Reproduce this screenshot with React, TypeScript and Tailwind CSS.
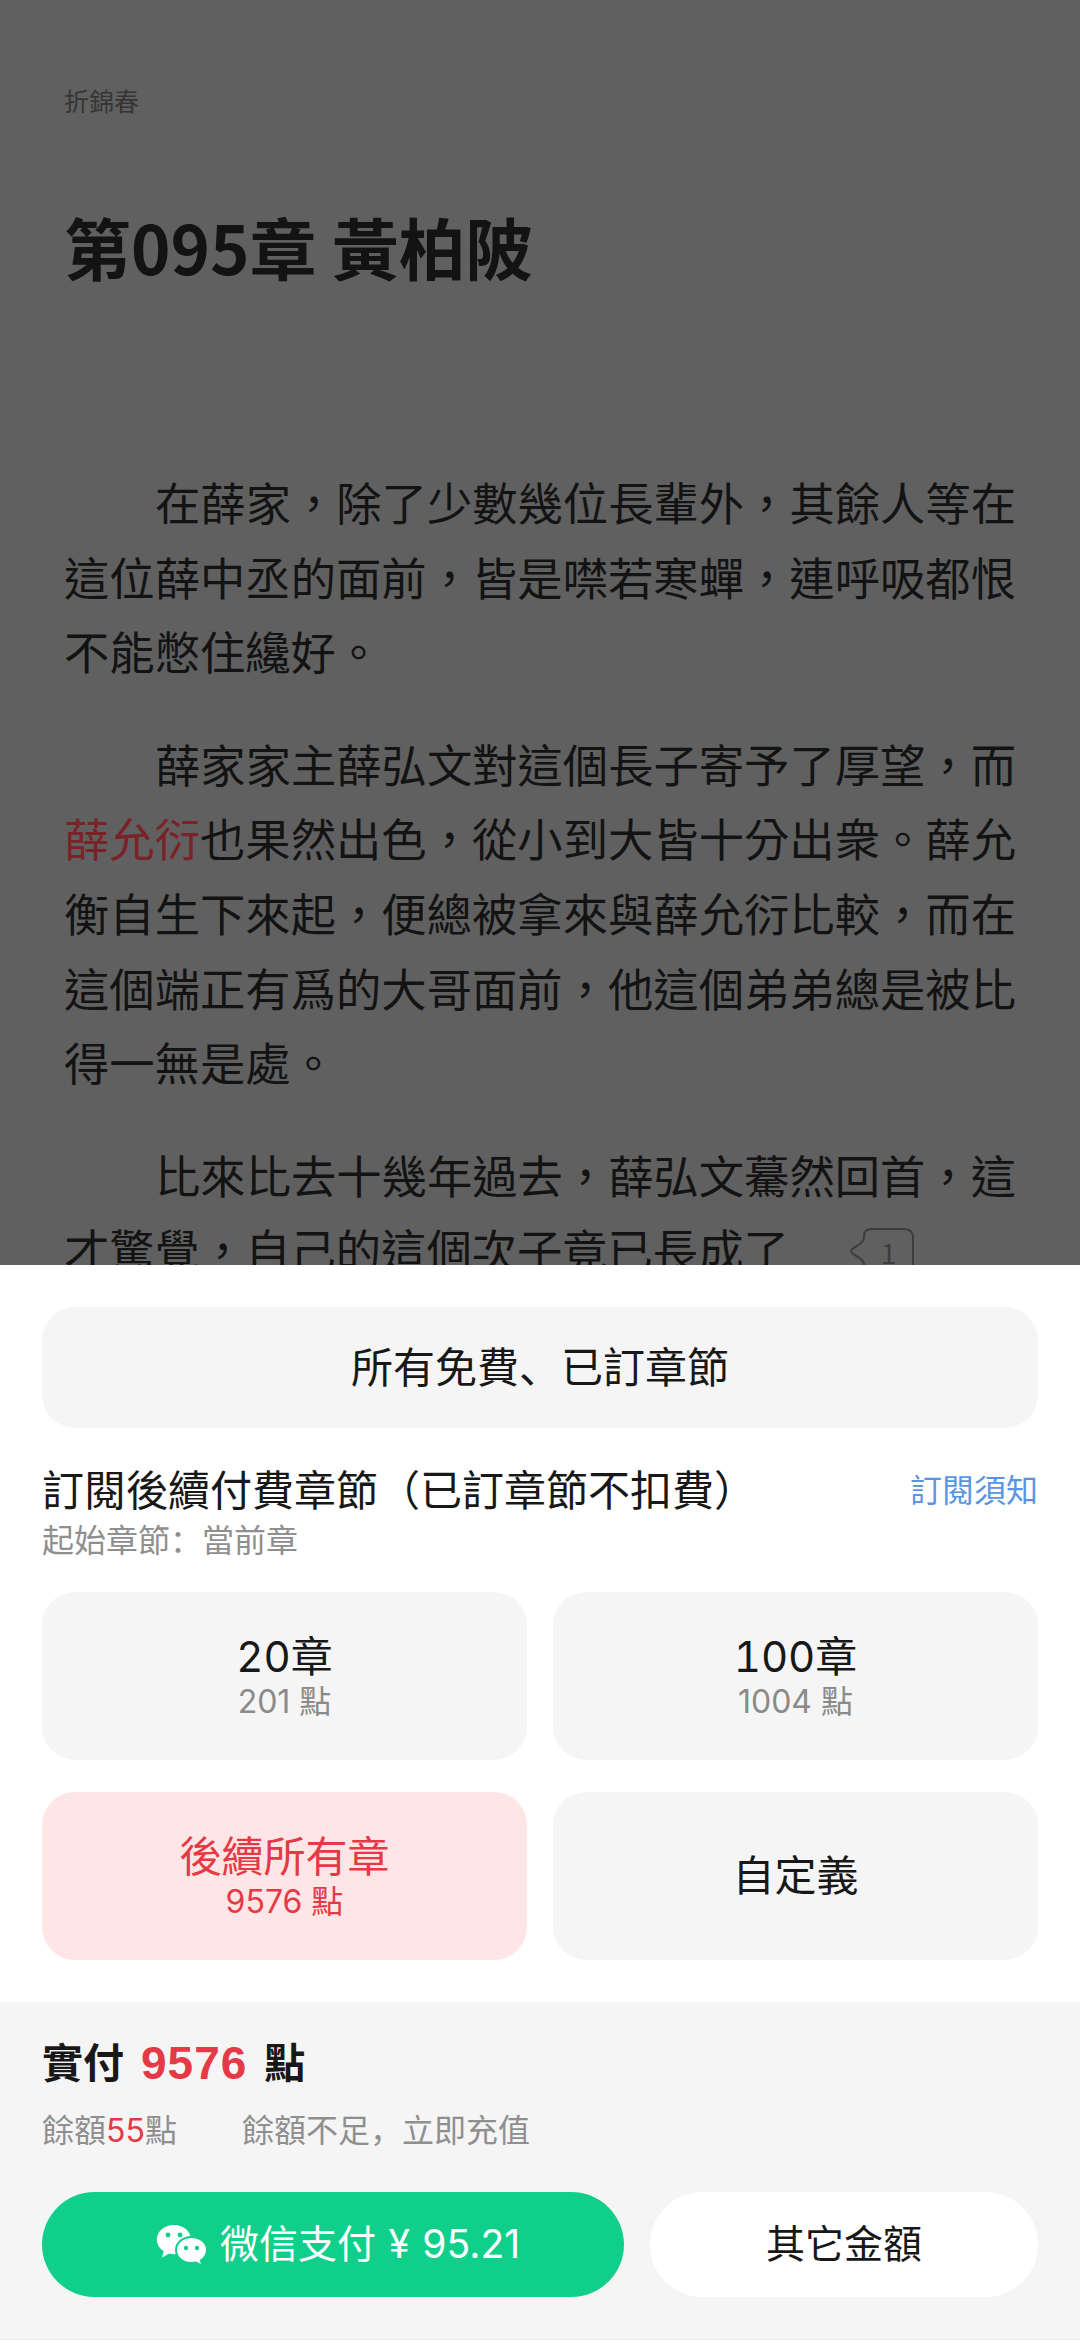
const bodyFont = "font-['Noto_Sans_CJK_TC',sans-serif]"

// comment count bubble at the end of a paragraph line
function CommentMark() {
  return (
    <span className="relative ml-[61px] inline-block h-[40px] w-[64px] indent-0">
      <svg viewBox="0 0 64 40" className="absolute left-0 top-0 h-[40px] w-[64px]" fill="none" stroke="#3c3c3c" strokeWidth="2">
        <path d="M14 40 V36 C14 30 1 27 1 23 C1 20 14 16 14 10 V8 C14 3 17 1 22 1 H54 C60 1 63 4 63 10 V40" />
      </svg>
      <span className="absolute left-[31px] top-[4px] text-[28px] leading-[40px] text-[#3c3c3c]">1</span>
    </span>
  )
}

function WeChatIcon() {
  return (
    <svg viewBox="0 0 52 42" className="h-[42px] w-[52px] shrink-0">
      <path fill="#fff" d="M18 1C8.300 1 .8 7.600.8 15.600c0 4.900 2.800 9 7 11.700l-1.900 6.400 7.100-4.100c1.600.4 3.200.6 5 .6 9.700 0 17-6.600 17-14.600S27.700 1 18 1z" />
      <path fill="#fff" stroke="#10cf8a" strokeWidth="2" d="M35.500 13C26.900 13 20 18.800 20 26c0 7.200 6.900 13 15.500 13 1.600 0 3-.2 4.400-.5l6.600 3.500-1.600-5.700C48.800 33.900 51 30.200 51 26c0-7.200-6.900-13-15.500-13z" />
      <circle cx="12" cy="11" r="2.400" fill="#10cf8a" />
      <circle cx="24" cy="11" r="2.400" fill="#10cf8a" />
      <circle cx="30" cy="24" r="2.200" fill="#10cf8a" />
      <circle cx="41" cy="24" r="2.200" fill="#10cf8a" />
    </svg>
  )
}

function PlanCard({ title, points, active }: { title: string; points?: string; active?: boolean }) {
  return (
    <div className={`flex h-[168px] flex-col items-center justify-center rounded-[33px] ${active ? 'bg-[#fee5e6]' : 'bg-[#f5f5f5]'}`}>
      <div className={`text-[42px] leading-[52px] tabular-nums ${active ? 'text-[#e63946]' : 'text-[#181818]'}`}>{title}</div>
      {points && <div className={`text-[32px] leading-[38px] ${active ? 'text-[#e63946]' : 'text-[#8a8a8a]'}`}>{points}</div>}
    </div>
  )
}

export default function App() {
  return (
    <div className="flex h-[2340px] w-[1080px] flex-col overflow-hidden bg-white font-['Inter','Noto_Sans_CJK_SC',sans-serif]">
      {/* chapter text, dimmed behind the sheet */}
      <div className={`h-[1265px] shrink-0 overflow-hidden bg-[#606060] px-[64px] pt-[82px] text-[#131313] ${bodyFont}`}>
        <div className="text-[25px] leading-[36px] text-[#353535]">折錦春</div>
        <h1 className="mt-[80px] text-[67px] font-bold leading-[96px]">第095章 黃柏陂</h1>
        <div className="mt-[170px] space-y-[38px] text-justify text-[45.300px] leading-[74.600px]">
          <p className="indent-[91px]">在薛家，除了少數幾位長輩外，其餘人等在這位薛中丞的面前，皆是噤若寒蟬，連呼吸都恨不能憋住纔好。</p>
          <p className="indent-[91px]">
            薛家家主薛弘文對這個長子寄予了厚望，而<span className="text-[#7a2226]">薛允衍</span>也果然出色，從小到大皆十分出衆。薛允衡自生下來起，便總被拿來與薛允衍比較，而在這個端正有爲的大哥面前，他這個弟弟總是被比得一無是處。
          </p>
          <p className="indent-[91px]">
            比來比去十幾年過去，薛弘文驀然回首，這才驚覺，自己的這個次子竟已長成了
            <CommentMark />
          </p>
        </div>
      </div>

      {/* subscribe sheet */}
      <div className="px-[42px] pt-[42px]">
        <div className="flex h-[121px] items-center justify-center rounded-[33px] bg-[#f5f5f5] text-[42px] text-[#181818]">所有免費、已訂章節</div>
        <div className="mt-[40px] flex items-center justify-between">
          <div className="text-[42px] leading-[46px] text-[#181818]">訂閱後續付費章節（已訂章節不扣費）</div>
          <div className="text-[32px] leading-[46px] text-[#5a95e2]">訂閱須知</div>
        </div>
        <div className="mt-[7px] text-[32px] leading-[40px] text-[#8f8f8f]">起始章節：當前章</div>
        <div className="mt-[31px] grid grid-cols-2 gap-x-[26px] gap-y-[32px]">
          <PlanCard title="20章" points="201 點" />
          <PlanCard title="100章" points="1004 點" />
          <PlanCard title="後續所有章" points="9576 點" active />
          <PlanCard title="自定義" />
        </div>
      </div>

      {/* payment footer */}
      <div className="mt-[42px] h-[338px] border-b border-[#ececec] bg-[#f5f5f5] px-[42px] pt-[34px]">
        <div className="flex items-center gap-[17px] text-[41px] font-bold leading-[54px] text-[#181818]">
          <span>實付</span>
          <span className="font-['Liberation_Sans',sans-serif] text-[46px] tracking-[1px] text-[#e63946]">9576</span>
          <span>點</span>
        </div>
        <div className="mt-[21px] flex text-[32px] leading-[40px] text-[#8f8f8f]">
          <span>
            餘額<span className="text-[#e63946]">55</span>點
          </span>
          <span className="ml-[65px]">餘額不足，立即充值</span>
        </div>
        <div className="mt-[41px] flex gap-[26px]">
          <div className="flex h-[105px] w-[582px] items-center justify-center gap-[12px] rounded-full bg-[#10cf8a] pl-[10px] text-[39px] text-white">
            <WeChatIcon />
            <span className="[word-spacing:1.500px]">微信支付 ¥ 95.21</span>
          </div>
          <div className="flex h-[105px] flex-1 items-center justify-center rounded-full bg-white text-[39px] text-[#181818]">其它金額</div>
        </div>
      </div>
    </div>
  )
}
